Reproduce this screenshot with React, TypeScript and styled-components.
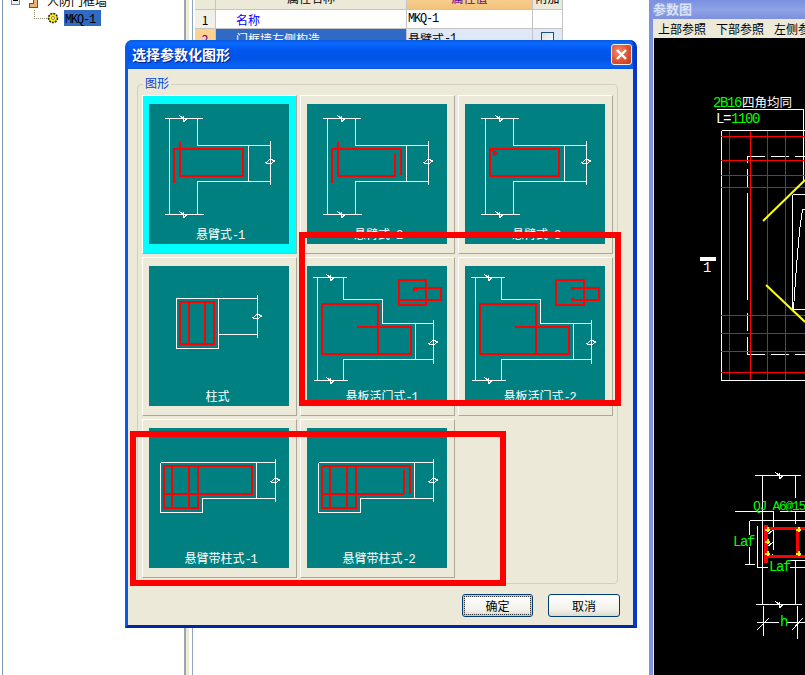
import React from "react";
import styled, { createGlobalStyle } from "styled-components";

const CJK = `"Noto Sans CJK SC", "Liberation Sans", sans-serif`;

const Global = createGlobalStyle`
  html, body { margin: 0; padding: 0; background: #fff; overflow: hidden; }
  * { box-sizing: border-box; }
`;

const Desktop = styled.div`
  position: relative;
  display: flex;
  width: 805px;
  height: 675px;
  overflow: hidden;
  background: #fff;
  font-family: ${CJK};
  font-size: 12px;
`;

/* tree */
const TreePanel = styled.div`
  width: 184px;
  height: 100%;
  margin-left: 2px;
  padding-left: 8px;
  margin-right: -2px;
  border-left: 1px solid #7f9db9;
  overflow: hidden;
`;
const TreeRoot = styled.div`
  display: flex;
  align-items: center;
  height: 19px;
  margin-top: -9px;
  color: #000;
`;
const Expander = styled.span`
  display: flex;
  width: 9px;
  height: 9px;
  margin-right: 9px;
`;
const NodeIcon = styled.span`
  display: flex;
  width: 10px;
  margin-right: 8px;
`;
const TreeChild = styled.div`
  display: flex;
  align-items: center;
  height: 16px;
  padding-left: 23px;
`;
const Gear = styled.span`
  display: flex;
  width: 12px;
  margin-right: 5px;
`;
const Connector = styled.span`
  display: flex;
  width: 13px;
  height: 16px;
`;
const Selected = styled.span`
  width: 37px;
  height: 16px;
  line-height: 16px;
  padding-left: 1px;
  background: #316ac5;
  color: #000;
`;
const Latin = styled.span`
  font-family: "Liberation Mono", monospace;
  font-size: 12px;
  letter-spacing: -1.2px;
`;

/* splitter */
const Splitter = styled.div`
  width: 9px;
  flex: none;
  height: 100%;
  margin-left: 2px;
  background: #ece9d8;
  border-left: 2px solid #9aa5b0;
  border-right: 1px solid #8fa5bd;
  box-shadow: inset -3px 0 0 #fff;
`;

/* table */
const TablePanel = styled.div`
  width: 456px;
  flex: none;
  padding-left: 2px;
  overflow: hidden;
`;
const PropTable = styled.div`
  display: grid;
  grid-template-columns: 21px 191px 126px 30px;
  grid-template-rows: 25px 19px 20px;
  width: 368px;
  margin-top: -15px;
`;
const Cell = styled.div<{ $bg?: string; $fg?: string; $align?: string }>`
  display: flex;
  align-items: center;
  justify-content: ${(p) => p.$align || "flex-start"};
  background: ${(p) => p.$bg || "#fff"};
  color: ${(p) => p.$fg || "#000"};
  border-right: 1px solid #c4c4c4;
  border-bottom: 1px solid #c4c4c4;
`;
const NameCell = styled(Cell)`
  padding-left: 20px;
`;
const ValueCell = styled(Cell)`
  padding-left: 1px;
`;
const Check = styled.span`
  width: 13px;
  height: 13px;
  border: 1px solid #1c5180;
  background: linear-gradient(135deg, #dcdcd7, #fff);
`;

/* drawing window */
const DrawingWindow = styled.div`
  display: flex;
  flex-direction: column;
  width: 156px;
  flex: none;
  height: 100%;
  border-left: 4px solid #8092e0;
`;
const DrawingTitle = styled.div`
  height: 19px;
  line-height: 18px;
  flex: none;
  background: linear-gradient(#7a8fdf, #8ea2e6 50%, #7d90dc);
  color: #d9e3f9;
  font-weight: 700;
  font-size: 13px;
`;
const MenuBar = styled.div`
  display: flex;
  gap: 10px;
  height: 19px;
  flex: none;
  line-height: 19px;
  padding-left: 5px;
  background: #ece9d8;
  white-space: nowrap;
  overflow: hidden;
  color: #000;
`;
const Canvas = styled.div`
  flex: 1;
  border-left: 1px solid #ece9d8;
  background: #000;
  svg { display: block; }
`;

/* dialog */
const Dialog = styled.div`
  position: absolute;
  left: 125px;
  top: 40px;
  display: flex;
  flex-direction: column;
  width: 512px;
  height: 588px;
  border-radius: 7px 7px 0 0;
  border-left: 3px solid #0a5ae6;
  border-right: 4px solid #0837c8;
  border-bottom: 3px solid #0026a8;
  background: #0a5ae6;
  overflow: hidden;
`;
const TitleBar = styled.div`
  display: flex;
  align-items: center;
  justify-content: space-between;
  height: 29px;
  flex: none;
  margin: 0 -4px 0 -3px;
  padding: 0 5px 0 7px;
  background: linear-gradient(#0a5bdf, #0a68ff 12%, #0058ee 35%, #0054e6 65%, #0a64f4 90%, #0a55de);
`;
const TitleText = styled.span`
  padding-bottom: 2px;
  color: #fff;
  font-size: 14px;
  font-weight: 700;
  text-shadow: 1px 1px 0 #0a1f8a;
`;
const CloseButton = styled.span`
  display: flex;
  align-items: center;
  justify-content: center;
  width: 21px;
  height: 21px;
  border: 1px solid #f4f0ee;
  border-radius: 3px;
  background: radial-gradient(circle at 35% 35%, #ef8f70, #e0512f 55%, #bf3a17);
`;
const Client = styled.div`
  flex: 1;
  display: flex;
  flex-direction: column;
  padding: 15px 15px 7px 9px;
  background: #ece9d8;
`;
const GroupBox = styled.div`
  position: relative;
  height: 500px;
  flex: none;
  padding: 10px 0 0 4px;
  border: 1px solid #d0d0bf;
  border-radius: 4px;
`;
const GroupLabel = styled.span`
  position: absolute;
  left: 5px;
  top: -10px;
  padding: 0 2px;
  line-height: 16px;
  color: #0046d5;
  background: #ece9d8;
`;
const ShapeGrid = styled.div`
  display: grid;
  grid-template-columns: repeat(3, 155px);
  grid-auto-rows: 159px;
  gap: 3px;
`;
const ShapeButton = styled.div<{ $selected?: boolean }>`
  padding: 8px 7px 0 6px;
  background: ${(p) => (p.$selected ? "#00ffff" : "#ece9d8")};
  border-top: 1px solid #fff;
  border-left: 1px solid #fff;
  border-right: 1px solid #aca899;
  border-bottom: 1px solid #aca899;
`;
const Picture = styled.div`
  width: 140px;
  height: 140px;
  background: #008080;
  svg { display: block; }
`;
const Caption = styled.div<{ $shift: number }>`
  height: 20px;
  line-height: 19px;
  text-align: center;
  text-indent: ${(p) => p.$shift}px;
  color: #fff;
  font-size: 12px;
`;
const Footer = styled.div`
  display: flex;
  justify-content: flex-end;
  gap: 15px;
  margin: 10px -2px 0 0;
`;
const PushButton = styled.div<{ $default?: boolean }>`
  position: relative;
  display: flex;
  align-items: center;
  justify-content: center;
  width: ${(p) => (p.$default ? 71 : 72)}px;
  height: 23px;
  border: 1px solid #003c74;
  border-radius: 3px;
  background: linear-gradient(#fff, #f2f1ea 70%, #dcd8cb);
  color: #000;
  box-shadow: ${(p) => (p.$default ? "inset 0 0 0 2px #b4cdee" : "none")};
  &::after {
    content: "";
    display: ${(p) => (p.$default ? "block" : "none")};
    position: absolute;
    inset: 1px;
    border: 1px dotted #333;
  }
`;
const Annotation = styled.div<{ $l: number; $t: number; $w: number; $h: number }>`
  position: absolute;
  left: ${(p) => p.$l}px;
  top: ${(p) => p.$t}px;
  width: ${(p) => p.$w}px;
  height: ${(p) => p.$h}px;
  border: 6px solid #ff0000;
`;

/* drawing helpers */
const bh = (x: number, y: number) =>
  `M${x + 0.5} ${y - 3}V${y + 3} M${x - 4} ${y - 3}L${x + 1} ${y} M${x + 1} ${y + 3}L${x + 4} ${y}`;
const bv = (x: number, y: number) =>
  `M${x - 5} ${y + 2.5}H${x} M${x - 5} ${y + 2}L${x} ${y - 2} M${x} ${y - 2}L${x + 4} ${y} M${x + 4} ${y}L${x} ${y + 3}`;

const cantilever =
  "M16 14.5H54 M20.5 14.5V110.5 M16 110.5H55 M48.5 14.5V41.5H122 M99.5 41.5V77.5 M48.5 110.5V77.5H122 M121.5 37V81 " +
  bh(34, 14.5) + " " + bh(34, 110.5) + " " + bv(121.5, 57);
const slab =
  "M6 11.5H40 M10.5 11.5V114.5 M7 114.5H41 M36.5 11.5V33.5H75.5V57.5H126 M108.5 57.5V93.5 M36.5 114.5V93.5H126 M126.5 54V98 " +
  bh(23, 11.5) + " " + bh(23, 114.5) + " " + bv(126.5, 76);
const cantCol =
  "M11.5 34.5H127 M11.5 34.5V84.5H53.5V70.5H127 M107.5 34.5V70.5 M126.5 31V74 " + bv(126.5, 52);

type Shape = { label: string; tail?: string; white: string; red: string[]; selected?: boolean; shift: number };

const slabRed = "M15 38H71V88H15Z M71 38V88H104V61H50";
const colBars = "M15 38H103V66H15 M15 38V80H49V38 M23 38V80 M40 38V80";

const shapes: Shape[] = [
  { label: "悬臂式", tail: "-1", selected: true, shift: 2, white: cantilever, red: ["M25 79V45H94V72H31V38"] },
  { label: "悬臂式", tail: "-2", shift: 2, white: cantilever, red: ["M25 79V45H94V71", "M88 50V72H31V38"] },
  { label: "悬臂式", tail: "-3", shift: 2, white: cantilever, red: ["M25 45H94V72H25Z", "M25 45L33 50 M27 44L30 52"] },
  {
    label: "柱式",
    shift: -3,
    white: "M27.5 32.5H69.5V82.5H27.5Z M69.5 32.5H108 M69.5 68.5H108 M108.5 29V72 " + bv(108.5, 50),
    red: ["M31 36H65V78H31Z M40 36V78 M56 36V78"],
  },
  {
    label: "悬板活门式",
    tail: "-1",
    shift: 9,
    white: slab,
    red: [slabRed, "M92 14H119V39H92Z M93 34H119", "M107 22H134V34H119 M107 22V25 M107 22L110 24"],
  },
  {
    label: "悬板活门式",
    tail: "-2",
    shift: 9,
    white: slab,
    red: [slabRed, "M91 14H119V39H91Z", "M106 22H134V34H106 M106 22L109 24 M106 34L109 32"],
  },
  { label: "悬臂带柱式", tail: "-1", shift: 3, white: cantCol, red: [colBars + " M103 38V66"] },
  {
    label: "悬臂带柱式",
    tail: "-2",
    shift: 3,
    white: cantCol,
    red: ["M15 66H97 M15 38V80H49V38 M23 38V80 M40 38V80 M15 38H103V66", "M97 42V66"],
  },
];

const ShapeArt = ({ s }: { s: Shape }) => (
  <svg width="140" height="120" viewBox="0 0 140 120" fill="none" shapeRendering="crispEdges">
    <path d={s.white} stroke="#fff" strokeWidth="1" />
    {s.red.map((d, i) => (
      <path key={i} d={d} stroke="#f00" strokeWidth="2" strokeLinejoin="round" />
    ))}
  </svg>
);

const GreenText = styled.text`
  fill: #00ff00;
  font-family: "Liberation Mono", monospace;
  font-size: 14px;
  letter-spacing: -1.4px;
`;
const GreenSmall = styled(GreenText)`
  font-size: 13px;
  letter-spacing: -1.3px;
`;
const WhiteMono = styled(GreenText)`
  fill: #fff;
`;
const WhiteCjk = styled.text`
  fill: #fff;
  font-family: ${CJK};
  font-size: 12.5px;
`;

const DrawingArt = () => (
  <svg width="151" height="637" viewBox="654 38 151 637" fill="none" shapeRendering="crispEdges">
    {/* upper section */}
    <path
      d="M717 109.5H803.5V180 M721.5 130.5H805 M721.5 130.5V380.5H805 M792.5 194.5H805 M792.5 194.5V309.5H805"
      stroke="#fff"
    />
    <path d="M747 156.5H805 M747 354.5H805" stroke="#fff" strokeDasharray="18 6" />
    <path d="M747.5 157V163 M747.5 169V187 M747.5 193V300 M747.5 313V331 M747.5 337V354" stroke="#fff" />
    <path d="M793.5 309L795.5 280L797.5 253L800 227L802.5 209.5H805" stroke="#fff" />
    <path
      d="M721 136.5H805 M721 160.5H805 M721 175.5H805 M721 187.5H805 M721 315.5H805 M721 333.5H805 M721 351.5H805 M721 372.5H805 M729.5 131V380 M750.5 131V380 M767.5 131V380 M785.5 131V380"
      stroke="#f00"
    />
    <path d="M763 221L805 180 M766 285L805 322" stroke="#ff0" strokeWidth="2" shapeRendering="auto" />
    <path d="M700 259H716" stroke="#fff" strokeWidth="4" />
    <GreenText x="713" y="107">2B16</GreenText>
    <WhiteCjk x="742" y="107">四角均同</WhiteCjk>
    <WhiteMono x="716" y="123">L=</WhiteMono>
    <GreenText x="731" y="123">1100</GreenText>
    <WhiteMono x="703" y="272">1</WhiteMono>

    {/* lower section */}
    <path
      d={
        "M755 475.5H801 M762.5 475.5V604.5 M795.5 475.5V498 M795.5 511V524 M735 511.5H773.5V550 M780 511.5H805 " +
        "M749.5 520.5H805 M749.5 520.5V535 M749.5 547V564.5 M745 564.5H755 M757.5 525.5V567.5H768 M790 567.5H805 M790 560.5H805 " +
        "M795.5 560V604.5 M756 604.5H802 M763.5 606V636 M797.5 606V639 M757 622.5H779 M787 622.5H805 " +
        bh(779, 475.5) + " " + bh(779, 604.5)
      }
      stroke="#fff"
    />
    <path d="M757 630L769 618 M792 630L803 618 M767 535L773 530 M767 547L773 542 M767 559L773 554" stroke="#fff" />
    <path d="M765.5 525V563" stroke="#f00" strokeWidth="4" />
    <path d="M766 528.5H805 M766 556.5H805 M797.5 528V556" stroke="#f00" strokeWidth="3" />
    <path
      d="M765 529.5H770 M767.5 527V532 M765 541.5H770 M767.5 539V544 M765 553.5H770 M767.5 551V556 M796 529.5H801 M798.5 527V532 M796 553.5H801 M798.5 551V556"
      stroke="#ff0"
      strokeWidth="2"
    />
    <GreenSmall x="753" y="510">QJ A6@150</GreenSmall>
    <GreenText x="733" y="546">Laf</GreenText>
    <GreenText x="769" y="571">Laf</GreenText>
    <GreenText x="780" y="626">h</GreenText>
  </svg>
);

export default function App() {
  return (
    <Desktop>
      <Global />
      <TreePanel>
        <TreeRoot>
          <Expander>
            <svg width="9" height="9" viewBox="0 0 9 9" shapeRendering="crispEdges">
              <rect x="0.5" y="0.5" width="8" height="8" fill="#eef0f0" stroke="#7a8a99" />
              <path d="M2 4.5H7" stroke="#000" />
            </svg>
          </Expander>
          <NodeIcon>
            <svg width="10" height="14" viewBox="0 0 10 14" shapeRendering="crispEdges">
              <path d="M4 0.5H8.5V13.5H0.5V9.5H4Z" fill="#f0b070" stroke="#8a4a20" />
            </svg>
          </NodeIcon>
          人防门框墙
        </TreeRoot>
        <TreeChild>
          <Connector>
            <svg width="13" height="16" viewBox="0 0 13 16" shapeRendering="crispEdges">
              <path d="M0.5 0V8.5H13" stroke="#8f8f70" strokeDasharray="1 1" fill="none" />
            </svg>
          </Connector>
          <Gear>
            <svg width="12" height="12" viewBox="0 0 12 12">
              <circle cx="6" cy="6" r="4.5" fill="#ffee00" stroke="#222" strokeWidth="1.6" strokeDasharray="2 1" />
              <circle cx="6" cy="6" r="1.5" fill="#fff" stroke="#555" strokeWidth="0.7" />
            </svg>
          </Gear>
          <Selected>
            <Latin>MKQ-1</Latin>
          </Selected>
        </TreeChild>
      </TreePanel>
      <Splitter />
      <TablePanel>
        <PropTable>
          <Cell $bg="#ece9d8" />
          <Cell $bg="#ece9d8" $align="center">属性名称</Cell>
          <Cell $bg="linear-gradient(#fbe0a8, #f3c27a)" $fg="#660099" $align="center">属性值</Cell>
          <Cell $bg="#ece9d8" $align="center">附加</Cell>

          <Cell $bg="#f3f1e7" $align="center">1</Cell>
          <NameCell $fg="#0000ff">名称</NameCell>
          <ValueCell><Latin>MKQ-1</Latin></ValueCell>
          <Cell />

          <Cell $bg="#fdd18f" $fg="#660099" $align="center">2</Cell>
          <NameCell $bg="#316ac5" $fg="#fff">门框墙左侧构造</NameCell>
          <ValueCell $bg="#dfe8f6">悬臂式<Latin>-1</Latin></ValueCell>
          <Cell $bg="#dfe8f6" $align="center"><Check /></Cell>
        </PropTable>
      </TablePanel>
      <DrawingWindow>
        <DrawingTitle>参数图</DrawingTitle>
        <MenuBar>
          <span>上部参照</span>
          <span>下部参照</span>
          <span>左侧参照</span>
        </MenuBar>
        <Canvas>
          <DrawingArt />
        </Canvas>
      </DrawingWindow>

      <Dialog>
        <TitleBar>
          <TitleText>选择参数化图形</TitleText>
          <CloseButton>
            <svg width="13" height="13" viewBox="0 0 13 13">
              <path d="M2 2L11 11M11 2L2 11" stroke="#fff" strokeWidth="2.4" />
            </svg>
          </CloseButton>
        </TitleBar>
        <Client>
          <GroupBox>
            <GroupLabel>图形</GroupLabel>
            <ShapeGrid>
              {shapes.map((s, i) => (
                <ShapeButton key={i} $selected={s.selected}>
                  <Picture>
                    <ShapeArt s={s} />
                    <Caption $shift={s.shift}>
                      {s.label}
                      {s.tail && <Latin>{s.tail}</Latin>}
                    </Caption>
                  </Picture>
                </ShapeButton>
              ))}
            </ShapeGrid>
          </GroupBox>
          <Footer>
            <PushButton $default>确定</PushButton>
            <PushButton>取消</PushButton>
          </Footer>
        </Client>
      </Dialog>

      <Annotation $l={299} $t={232} $w={322} $h={174} />
      <Annotation $l={130} $t={431} $w={376} $h={155} />
    </Desktop>
  );
}
